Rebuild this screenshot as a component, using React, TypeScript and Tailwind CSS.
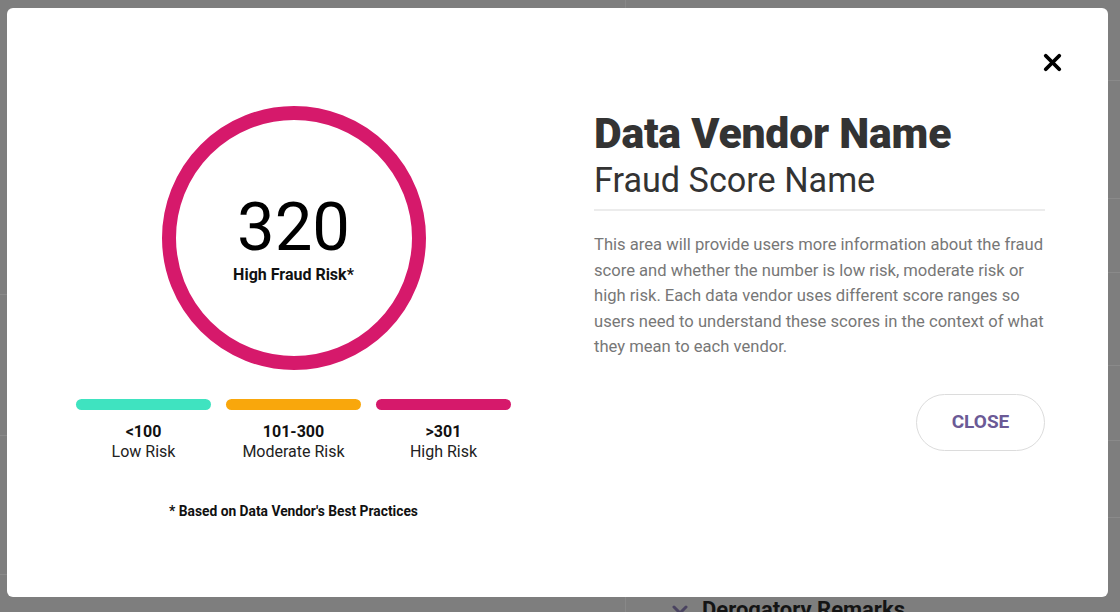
import { X, ChevronDown } from 'lucide-react';

const ranges = [
  { range: '<100', label: 'Low Risk', color: 'bg-[#3fe3c0]' },
  { range: '101-300', label: 'Moderate Risk', color: 'bg-[#f9a70c]' },
  { range: '>301', label: 'High Risk', color: 'bg-[#d6196b]' },
];

function Backdrop() {
  return (
    <div className="absolute inset-0 bg-[#7e7e7e]">
      {/* dimmed page behind the modal */}
      <div className="absolute left-[625px] top-0 bottom-0 w-px bg-[#888888]" />
      <div className="absolute right-0 top-[80px] w-[30px] h-px bg-[#8a8a8a]" />
      <div className="absolute right-0 top-[198px] w-[30px] h-px bg-[#8a8a8a]" />
      <div className="absolute right-0 top-[272px] w-[30px] h-px bg-[#8a8a8a]" />
      <div className="absolute right-0 top-[365px] w-[30px] h-px bg-[#8a8a8a]" />
      <div className="absolute right-0 top-[440px] w-[30px] h-px bg-[#8a8a8a]" />
      <div className="absolute right-0 top-[517px] w-[30px] h-px bg-[#8a8a8a]" />
      <div className="absolute left-0 top-[294px] w-[8px] h-px bg-[#8a8a8a]" />
      <div className="absolute left-0 top-[435px] w-[8px] h-px bg-[#8a8a8a]" />
      <div className="absolute left-0 top-[574px] w-[8px] h-px bg-[#8a8a8a]" />
      <div className="absolute left-[668px] top-[596px] flex items-center gap-[10px]">
        <ChevronDown className="w-[24px] h-[24px] text-[#4a4360]" strokeWidth={3} />
        <span className="text-[22px] font-bold text-[#141414] leading-[28px]">Derogatory Remarks</span>
      </div>
    </div>
  );
}

export default function App() {
  return (
    <div className="relative w-[1120px] h-[612px] overflow-hidden font-['Roboto',sans-serif]">
      <Backdrop />

      {/* Modal */}
      <div className="absolute left-[7px] top-[8px] w-[1101px] h-[589px] rounded-[6px] bg-white">
        <button className="absolute right-[42px] top-[41px] text-black">
          <X className="w-[27px] h-[27px]" strokeWidth={3.4} />
        </button>

        <div className="flex pl-[69px]">
          {/* Score column */}
          <div className="w-[435px] flex flex-col items-center pt-[98px]">
            <div className="w-[264px] h-[264px] rounded-full border-[14px] border-[#d6196b] flex flex-col items-center justify-center">
              <div className="text-[67px] leading-[56px] text-black mt-[7px]">320</div>
              <div className="text-[16px] font-bold text-[#111] leading-[20px] mt-[10px]">High Fraud Risk*</div>
            </div>

            <div className="grid grid-cols-3 gap-[15px] w-full mt-[29px]">
              {ranges.map((r) => (
                <div key={r.range} className="flex flex-col items-center">
                  <div className={`w-full h-[11px] rounded-full ${r.color}`} />
                  <div className="text-[16px] font-bold text-[#111] leading-[20px] mt-[12px]">{r.range}</div>
                  <div className="text-[16px] text-[#222] leading-[20px]">{r.label}</div>
                </div>
              ))}
            </div>

            <div className="text-[13.8px] font-bold text-[#111] leading-[18px] mt-[40px]">
              * Based on Data Vendor&apos;s Best Practices
            </div>
          </div>

          {/* Info column */}
          <div className="w-[451px] ml-[83px] pt-[104px] flex flex-col">
            <h2 className="text-[42.7px] font-black text-[#333333] leading-[42px] tracking-[-0.2px]">Data Vendor Name</h2>
            <h3 className="text-[34.2px] text-[#333333] leading-[40px] mt-[6px]">Fraud Score Name</h3>
            <div className="h-[2px] bg-[#ececec] mt-[9px]" />
            <p className="text-[16.6px] text-[#777777] leading-[25.5px] mt-[21px]">
              This area will provide users more information about the fraud score and whether the number is low risk,
              moderate risk or high risk. Each data vendor uses different score ranges so users need to understand these
              scores in the context of what they mean to each vendor.
            </p>
            <div className="flex justify-end mt-[34px]">
              <button className="w-[129px] h-[57px] rounded-full border border-[#dcdcdc] text-[19px] font-bold text-[#6b5a96]">
                CLOSE
              </button>
            </div>
          </div>
        </div>
      </div>
    </div>
  );
}
